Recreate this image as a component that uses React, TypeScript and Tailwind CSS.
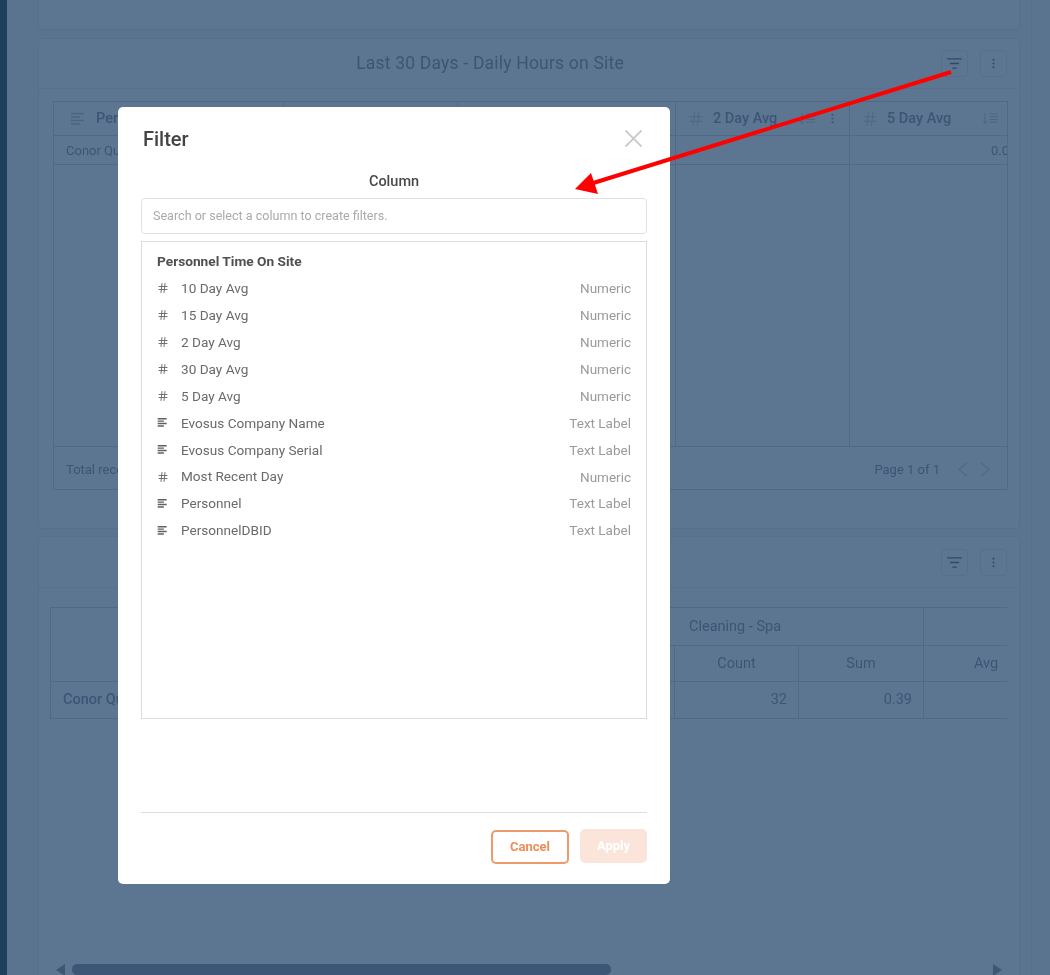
import { Hash } from "lucide-react";

const columns = [
  { name: "10 Day Avg", type: "Numeric" },
  { name: "15 Day Avg", type: "Numeric" },
  { name: "2 Day Avg", type: "Numeric" },
  { name: "30 Day Avg", type: "Numeric" },
  { name: "5 Day Avg", type: "Numeric" },
  { name: "Evosus Company Name", type: "Text Label" },
  { name: "Evosus Company Serial", type: "Text Label" },
  { name: "Most Recent Day", type: "Numeric" },
  { name: "Personnel", type: "Text Label" },
  { name: "PersonnelDBID", type: "Text Label" },
];

function TextIcon({ className, width = 1.5 }: { className: string; width?: number }) {
  return (
    <svg viewBox="0 0 16 14" fill="none" stroke="currentColor" strokeWidth={width} className={className}>
      <path d="M1 1.500h13M1 5h9M1 8.500h13M1 12h9" />
    </svg>
  );
}

function SortIcon() {
  return (
    <svg viewBox="0 0 18 14" fill="none" stroke="currentColor" strokeWidth="1" className="w-[17px] h-[13px] text-[#4a6482]">
      <path d="M3 1v11M1 10l2 2.500L5 10M8 2h9M8 5h9M8 8h9M8 11h9" />
    </svg>
  );
}

function Kebab({ className }: { className: string }) {
  return (
    <svg viewBox="0 0 4 14" fill="currentColor" className={className}>
      <circle cx="2" cy="2" r="1.4" />
      <circle cx="2" cy="7" r="1.4" />
      <circle cx="2" cy="12" r="1.4" />
    </svg>
  );
}

function Chevron({ flip }: { flip?: boolean }) {
  return (
    <svg viewBox="0 0 10 15" fill="none" stroke="currentColor" strokeWidth="1.3" className="w-[10px] h-[15px] text-[#4f6a88]">
      <path d={flip ? "M1 0.500L9 7.500L1 14.500" : "M9 0.500L1 7.500L9 14.500"} />
    </svg>
  );
}

function CardButtons() {
  return (
    <div className="flex gap-3">
      <div className="w-[27px] h-[27px] rounded-[4px] border border-[#55708d] flex items-center justify-center">
        <svg viewBox="0 0 16 12" fill="none" stroke="currentColor" strokeWidth="1.4" className="w-[15px] h-[11px] text-[#2f4a69]">
          <path d="M0 1h16M3 6h10M5.500 11h5" />
        </svg>
      </div>
      <div className="w-[27px] h-[27px] rounded-[4px] border border-[#55708d] flex items-center justify-center">
        <Kebab className="w-[3px] h-[11px] text-[#2f4a69]" />
      </div>
    </div>
  );
}

export default function App() {
  return (
    <div className="relative w-[1050px] h-[975px] overflow-hidden flex bg-[#5a7490] blur-[0.35px] font-['Roboto',sans-serif]">
      {/* dark sidebar edge */}
      <div className="w-[7px] shrink-0 bg-[#1f3f5f]" />

      <main className="w-[1025px] pl-[31px] flex flex-col border-r border-[#55708d] text-[#3c5575]">
        <div className="w-[982px] h-[30px] shrink-0 bg-[#5c7692] border border-t-0 border-[#55708d] rounded-b-[4px]" />

        {/* Daily hours card */}
        <section className="w-[982px] h-[491px] shrink-0 mt-2 bg-[#5c7692] border border-[#55708d] rounded-[4px] flex flex-col">
          <div className="h-[50px] shrink-0 flex items-center pr-3 border-b border-[#57718e]">
            <div className="flex-1 text-center text-[17.500px] tracking-[0.2px]">Last 30 Days - Daily Hours on Site</div>
            <CardButtons />
          </div>
          <div className="mt-3 ml-[14px] w-[955px] h-[389px] border border-[#4f6a87] flex flex-col">
            <div className="h-[34px] shrink-0 grid grid-cols-[230px_174px_218px_174px_157px] border-b border-[#4f6a87] text-[14.500px] font-medium">
              <div className="flex items-center pl-4 gap-[10px] border-r border-[#4f6a87]">
                <TextIcon className="w-[16px] h-[14px] text-[#4a6482]" />
                <span>Personnel</span>
              </div>
              <div className="border-r border-[#4f6a87]" />
              <div className="border-r border-[#4f6a87]" />
              <div className="flex items-center pl-[11px] border-r border-[#4f6a87]">
                <Hash className="w-[18px] h-[18px] text-[#4a6482]" strokeWidth={1.1} />
                <span className="ml-[8px] flex-1">2 Day Avg</span>
                <SortIcon />
                <Kebab className="w-[3px] h-[11px] mx-[15px]" />
              </div>
              <div className="flex items-center pl-[11px] pr-2">
                <Hash className="w-[18px] h-[18px] text-[#4a6482]" strokeWidth={1.1} />
                <span className="ml-[8px] flex-1">5 Day Avg</span>
                <SortIcon />
              </div>
            </div>
            <div className="h-[29px] shrink-0 grid grid-cols-[622px_174px_157px] border-b border-[#4f6a87] text-[13px] leading-[30px]">
              <div className="pl-3 border-r border-[#4f6a87]">Conor Quinn</div>
              <div className="border-r border-[#4f6a87]" />
              <div className="pl-[141px] overflow-hidden whitespace-nowrap">0.00</div>
            </div>
            <div className="flex-1 grid grid-cols-[622px_174px_157px] border-b border-[#4f6a87]">
              <div className="border-r border-[#4f6a87]" />
              <div className="border-r border-[#4f6a87]" />
              <div />
            </div>
            <div className="h-[42px] shrink-0 flex items-center justify-between pt-[3px] pl-3 pr-[17px] text-[13px]">
              <span>Total records: 1</span>
              <div className="flex items-center gap-[12px]">
                <span className="mr-[6px]">Page 1 of 1</span>
                <Chevron />
                <Chevron flip />
              </div>
            </div>
          </div>
        </section>

        {/* Pivot card */}
        <section className="w-[982px] flex-1 mt-[7px] bg-[#5c7692] border border-b-0 border-[#55708d] rounded-t-[4px] flex flex-col min-h-0">
          <div className="h-[51px] shrink-0 flex items-center justify-end pr-3 border-b border-[#57718e]">
            <CardButtons />
          </div>
          <div className="mt-[19px] ml-[11px] w-[957px] overflow-hidden border-l border-t border-[#4f6a87] text-[14.500px]">
            <div className="w-[1000px] grid grid-cols-[312px_311px_124px_125px_125px] grid-rows-[38px_36px_37px]">
              <div className="row-span-2 border-b border-[#4f6a87]" />
              <div className="col-span-3 flex items-center pl-[326px] border-b border-[#4f6a87]">Cleaning - Spa</div>
              <div className="border-b border-l border-[#4f6a87]" />
              <div className="border-b border-[#4f6a87]" />
              <div className="border-b border-l border-[#4f6a87] flex items-center justify-center">Count</div>
              <div className="border-b border-l border-[#4f6a87] flex items-center justify-center">Sum</div>
              <div className="border-b border-l border-[#4f6a87] flex items-center justify-center">Avg</div>
              <div className="col-span-2 border-b border-[#4f6a87] flex items-center pl-3 font-medium">Conor Quinn</div>
              <div className="border-b border-l border-[#4f6a87] flex items-center justify-end pr-[11px]">32</div>
              <div className="border-b border-l border-[#4f6a87] flex items-center justify-end pr-[11px]">0.39</div>
              <div className="border-b border-l border-[#4f6a87]" />
            </div>
          </div>
          {/* horizontal scrollbar */}
          <div className="mt-auto h-[11px] shrink-0 flex items-center pl-[17px]">
            <div className="w-0 h-0 border-y-[6px] border-y-transparent border-r-[9px] border-r-[#3c5775]" />
            <div className="ml-[7px] w-[539px] h-[11px] rounded-[5px] bg-[#3c5775]" />
            <div className="ml-[382px] w-0 h-0 border-y-[6px] border-y-transparent border-l-[9px] border-l-[#3c5775]" />
          </div>
        </section>
      </main>

      {/* Filter modal */}
      <div className="absolute left-[118px] top-[107px] w-[552px] h-[777px] bg-white rounded-[5px] flex flex-col px-[23px]">
        <div className="flex items-start justify-between h-[45px] pt-[19px] pl-[2px]">
          <h2 className="text-[20px] leading-[26px] font-medium text-[#444444]">Filter</h2>
          <svg viewBox="0 0 17 17" fill="none" stroke="#c8c8c8" strokeWidth="1.8" className="w-[17px] h-[17px] mt-[4px] mr-[5px]">
            <path d="M0.500 0.500L16.500 16.500M16.500 0.500L0.500 16.500" />
          </svg>
        </div>
        <div className="mt-[20px] text-center text-[14.500px] leading-[20px] font-medium text-[#484848]">Column</div>
        <div className="mt-[6px] h-[36px] shrink-0 border border-[#e2e2e2] rounded-[4px] flex items-center pl-[11px] text-[12.550px] text-[#aaaaaa]">
          Search or select a column to create filters.
        </div>
        <div className="mt-[7px] h-[478px] shrink-0 border border-[#dcdcdc] pt-[6px] px-[15px]">
          <div className="h-[27px] flex items-center text-[13.700px] font-bold text-[#505050]">Personnel Time On Site</div>
          {columns.map((col) => (
            <div key={col.name} className="h-[26.900px] flex items-center text-[13.600px] text-[#6a6a6a]">
              <div className="w-[24px] shrink-0">
                {col.type === "Numeric" ? (
                  <Hash className="w-[12px] h-[12px] text-[#707070]" strokeWidth={2} />
                ) : (
                  <TextIcon className="w-[11px] h-[11px] text-[#606060]" width={2} />
                )}
              </div>
              <span className="flex-1">{col.name}</span>
              <span className="text-[13.500px] text-[#9a9a9a]">{col.type}</span>
            </div>
          ))}
        </div>
        <div className="mt-[93px] border-t border-[#dedede]" />
        <div className="mt-[17px] flex justify-end gap-[11px]">
          <button className="w-[78px] h-[34px] rounded-[5px] border-2 border-[#ee9a6c] bg-white text-[13px] font-bold text-[#ee8d58]">Cancel</button>
          <button className="w-[67px] h-[34px] -mt-[1px] rounded-[5px] bg-[#fbe5da] text-[13px] font-bold text-white">Apply</button>
        </div>
      </div>

      {/* annotation arrow */}
      <svg className="absolute inset-0 w-[1050px] h-[975px] pointer-events-none" viewBox="0 0 1050 975">
        <path d="M951 72L590 184" stroke="#ff0000" strokeWidth="4" fill="none" />
        <path d="M575 189L591 173L598 194Z" fill="#ff0000" />
      </svg>
    </div>
  );
}
